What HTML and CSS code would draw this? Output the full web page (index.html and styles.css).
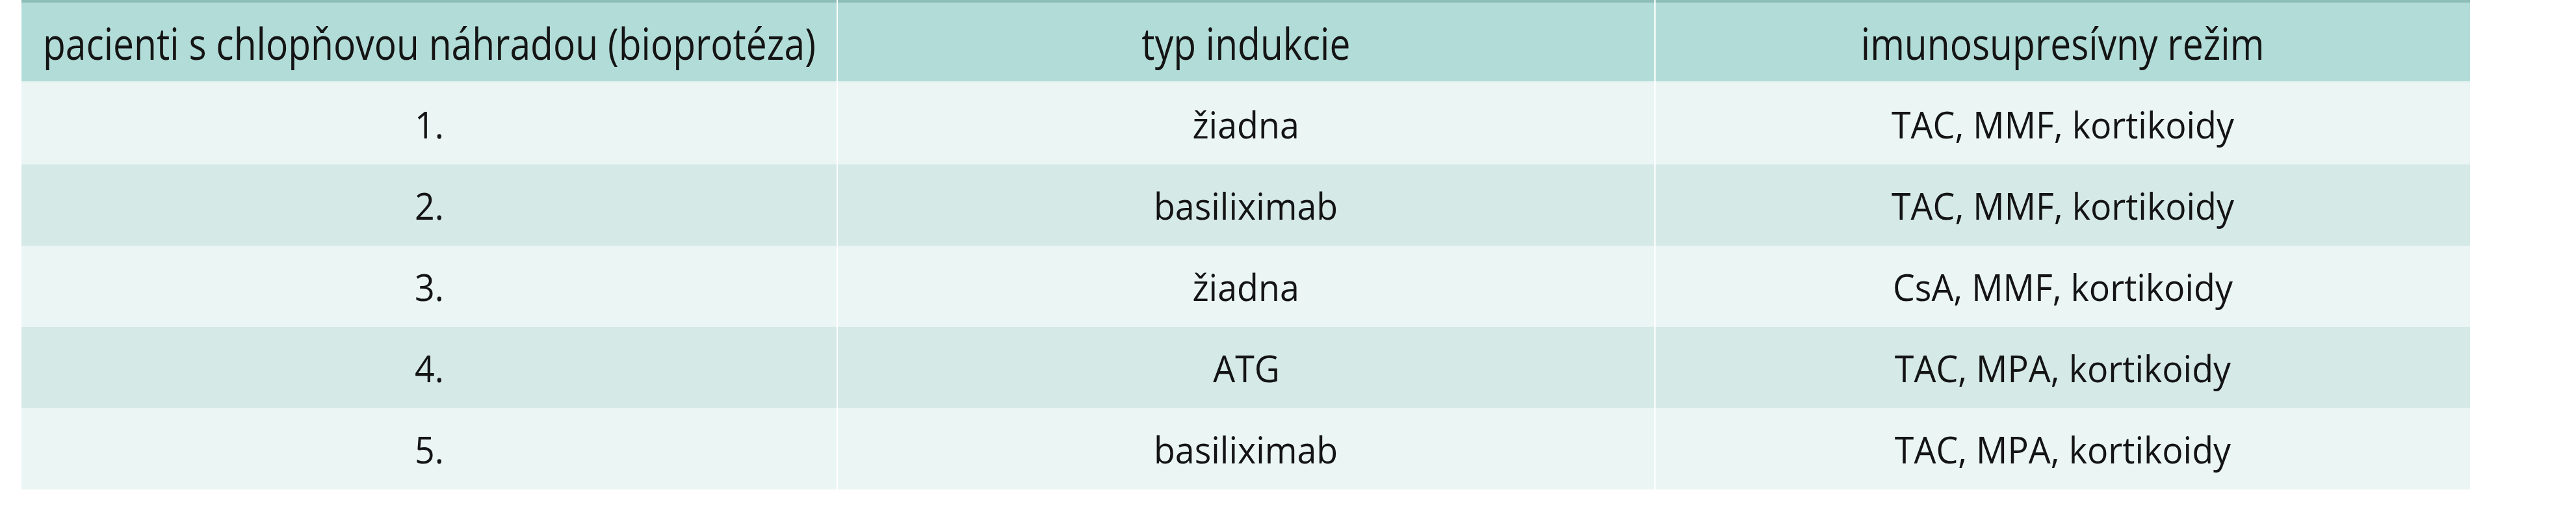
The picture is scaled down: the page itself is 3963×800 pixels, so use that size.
FILE: index.html
```html
<!DOCTYPE html>
<html lang="sk">
<head>
<meta charset="utf-8">
<title>Tabuľka</title>
<link rel="stylesheet" href="styles.css">
</head>
<body>
<div class="page">
  <div class="table">
    <div class="row head">
      <div class="cell"><span class="txt">pacienti s chlopňovou náhradou (bioprotéza)</span></div>
      <div class="cell"><span class="txt">typ indukcie</span></div>
      <div class="cell"><span class="txt">imunosupresívny režim</span></div>
    </div>
    <div class="row odd">
      <div class="cell"><span class="txt">1.</span></div>
      <div class="cell"><span class="txt">žiadna</span></div>
      <div class="cell"><span class="txt">TAC, MMF, kortikoidy</span></div>
    </div>
    <div class="row even">
      <div class="cell"><span class="txt">2.</span></div>
      <div class="cell"><span class="txt">basiliximab</span></div>
      <div class="cell"><span class="txt">TAC, MMF, kortikoidy</span></div>
    </div>
    <div class="row odd">
      <div class="cell"><span class="txt">3.</span></div>
      <div class="cell"><span class="txt">žiadna</span></div>
      <div class="cell"><span class="txt">CsA, MMF, kortikoidy</span></div>
    </div>
    <div class="row even">
      <div class="cell"><span class="txt">4.</span></div>
      <div class="cell"><span class="txt">ATG</span></div>
      <div class="cell"><span class="txt">TAC, MPA, kortikoidy</span></div>
    </div>
    <div class="row odd">
      <div class="cell"><span class="txt">5.</span></div>
      <div class="cell"><span class="txt">basiliximab</span></div>
      <div class="cell"><span class="txt">TAC, MPA, kortikoidy</span></div>
    </div>
  </div>
</div>
</body>
</html>
```

FILE: styles.css
```css
html, body {
  margin: 0;
  padding: 0;
  background: #ffffff;
}

.page {
  padding-left: 33px;
}

.table {
  width: 3767px;
  font-family: "Open Sans", "Noto Sans", "Liberation Sans", sans-serif;
  color: #141414;
}

.row {
  display: grid;
  grid-template-columns: 1254px 1256px 1253px;
  column-gap: 2px;
  background: #ffffff;
}

.cell {
  display: flex;
  align-items: center;
  justify-content: center;
  white-space: nowrap;
  overflow: visible;
}

.txt {
  display: inline-block;
  line-height: 1;
  transform-origin: center center;
}

.head .cell {
  box-sizing: content-box;
  height: 118px;
  padding-top: 3px;
  background: #b2dcd8;
  border-top: 4px solid #8dbdb8;
  border-bottom: 3px solid #e4f3f1;
  font-size: 67px;
}

.head .txt {
  transform: scaleX(0.85);
}

.odd .cell,
.even .cell {
  box-sizing: border-box;
  height: 125px;
  font-size: 56px;
}

.odd .txt,
.even .txt {
  transform: scaleX(0.96);
}

.odd .cell {
  background: #eaf5f4;
}

.even .cell {
  background: #d5e9e7;
}
```
